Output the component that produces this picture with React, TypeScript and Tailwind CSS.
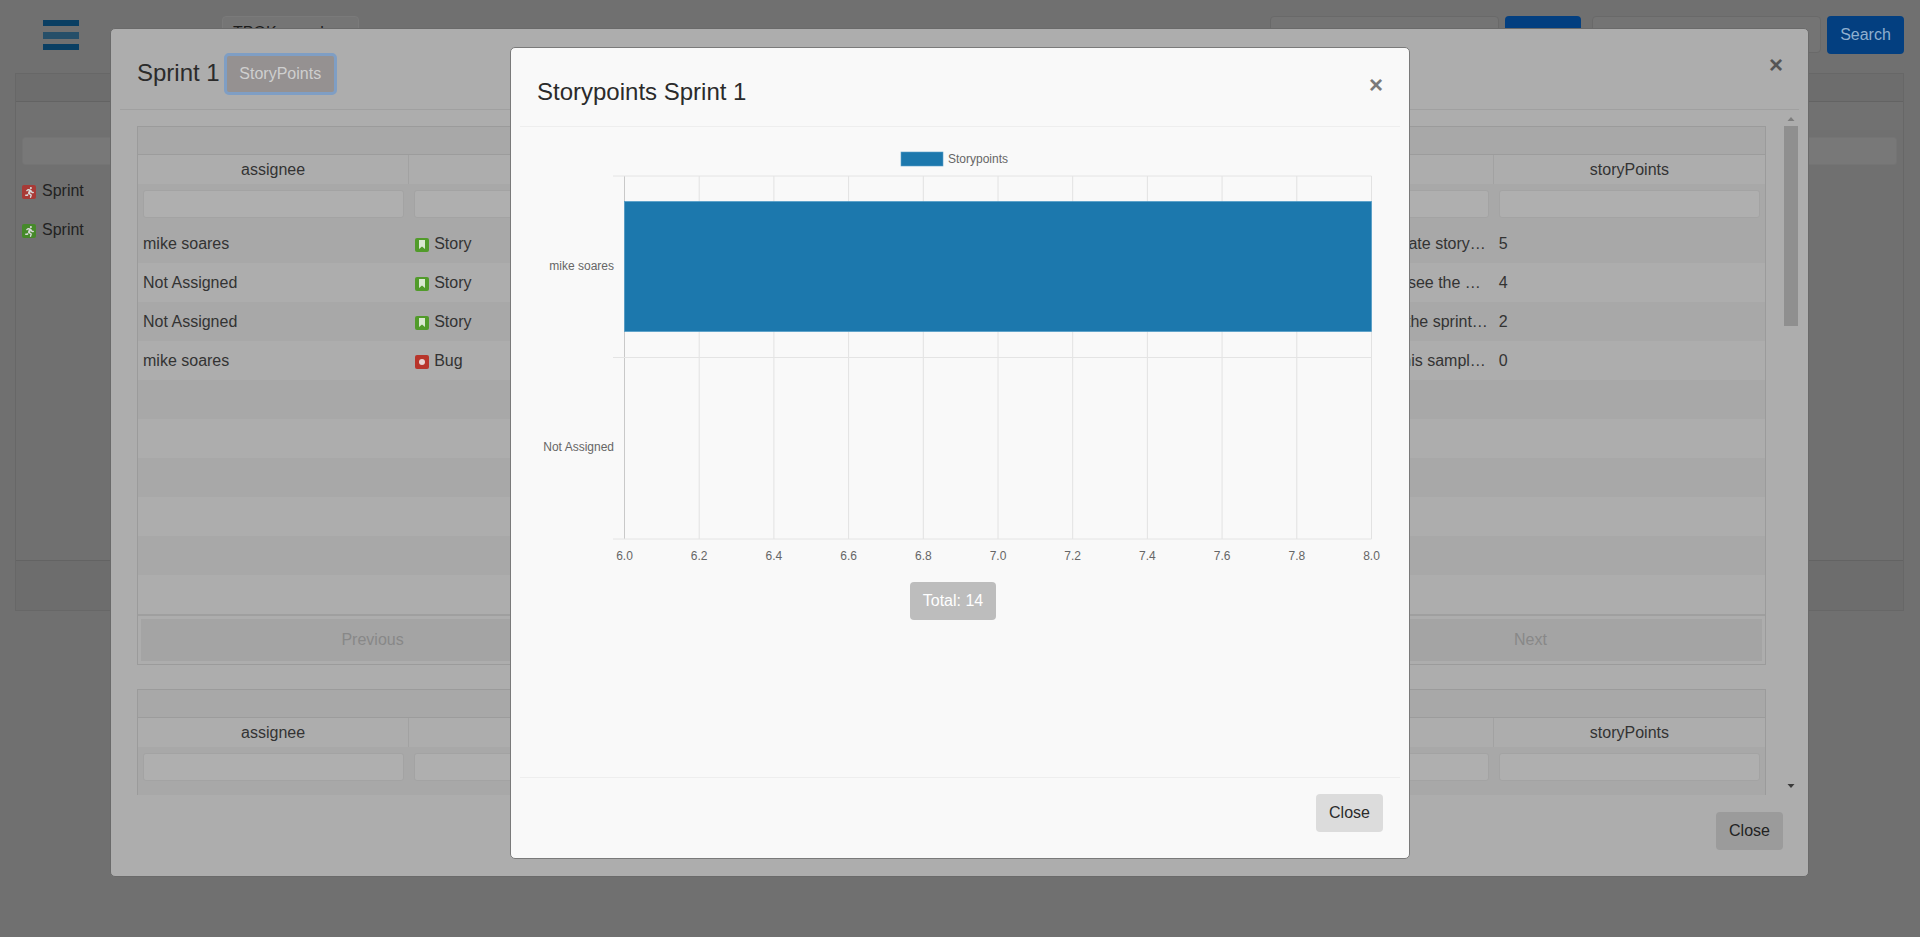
import React from "react";
import { FaRunning } from "react-icons/fa";

const font = "font-['Liberation_Sans',Arial,sans-serif]";

function SprintIcon({ color }: { color: string }) {
  return (
    <span className={`mt-[2px] flex h-[14px] w-[14px] items-center justify-center rounded-[2px] ${color}`}>
      <FaRunning className="h-[11px] w-[11px] text-[#d8d8d8]" />
    </span>
  );
}

function StoryIcon() {
  return (
    <span className="mt-[2px] flex h-[14px] w-[14px] items-center justify-center rounded-[2px] bg-[#519b2a]">
      <svg width="8" height="9" viewBox="0 0 8 9">
        <path d="M1 0h6v9L4 6.6 1 9z" fill="#d9e8d0" />
      </svg>
    </span>
  );
}

function BugIcon() {
  return (
    <span className="mt-[2px] flex h-[14px] w-[14px] items-center justify-center rounded-[2px] bg-[#b8352b]">
      <span className="h-[6px] w-[6px] rounded-full bg-[#e6d5d3]" />
    </span>
  );
}

function BackgroundPage() {
  return (
    <div className="flex h-full flex-col">
      <div className="flex h-[73px] items-start pt-[16px]">
        <div className="ml-[43px] mt-[4px] flex h-[30px] w-[36px] flex-col justify-between">
          <span className="h-[6px] bg-[#0a3f63]" />
          <span className="h-[7px] bg-[#264f69]" />
          <span className="h-[6px] bg-[#0a3f63]" />
        </div>
        <div className="ml-[143px] h-[37px] w-[137px] rounded-[4px] border border-[#7a7a7a] bg-[#757575] px-[10px] pt-[4px] text-[16px] text-[#1c1c1c]">
          TPOK sample
        </div>
        <div className="ml-[911px] h-[37px] w-[229px] rounded-[4px] border border-[#696969] bg-[#747474]" />
        <div className="ml-[6px] h-[37px] w-[76px] rounded-[4px] bg-[#033f80]" />
        <div className="ml-[11px] h-[37px] w-[229px] rounded-[4px] border border-[#696969] bg-[#747474]" />
        <div className="ml-[6px] flex h-[38px] w-[77px] items-center justify-center rounded-[4px] bg-[#033f80] text-[16px] text-[#8fb0d0]">
          Search
        </div>
      </div>
      <div className="ml-[15px] flex h-[538px] w-[1889px] flex-col border border-[#676767] bg-[#707070]">
        <div className="h-[28px] shrink-0 border-b border-[#636363] bg-[#6d6d6d]" />
        <div className="h-[28px] shrink-0 bg-[#717171]" />
        <div className="mx-[6px] mt-[7px] h-[28px] shrink-0 rounded-[3px] border border-[#747474] bg-[#787878]" />
        <div className="ml-[6px] mt-[16px] flex h-[20px] items-center gap-[6px] text-[16px] text-[#222222]">
          <SprintIcon color="bg-[#a83a36]" />
          Sprint
        </div>
        <div className="ml-[6px] mt-[19px] flex h-[20px] items-center gap-[6px] text-[16px] text-[#222222]">
          <SprintIcon color="bg-[#46892a]" />
          Sprint
        </div>
        <div className="mt-auto h-[50px] shrink-0 border-t border-[#636363] bg-[#6d6d6d]" />
      </div>
    </div>
  );
}

const rows: [string, "Story" | "Bug", string, string, string][] = [
  ["mike soares", "Story", "As a user, I can estimate story…", "5", "pr-[8px]"],
  ["Not Assigned", "Story", "As a user, I can see the …", "4", "pr-[13px]"],
  ["Not Assigned", "Story", "As a team, I can finish the sprint…", "2", "pr-[6px]"],
  ["mike soares", "Bug", "As a developer, this sampl…", "0", "pr-[8px]"],
];

function DataTable() {
  const heads = ["assignee", "issuetype", "key", "status", "summary", "storyPoints"];
  const empties = Array.from({ length: 6 });
  return (
    <div className="w-[1629px] border border-[#9b9b9b] text-[16px] text-[#333333]">
      <div className="h-[28px] border-b border-[#9c9c9c] bg-[#a8a8a8]" />
      <div className="grid h-[29px] grid-cols-6 bg-[#adadad]">
        {heads.map((h) => (
          <div key={h} className="flex items-center justify-center border-r border-[#a2a2a2] last:border-r-0">
            {h}
          </div>
        ))}
      </div>
      <div className="grid h-[40px] grid-cols-6 bg-[#a8a8a8]">
        {heads.map((h) => (
          <div key={h} className="px-[5px] pt-[6px]">
            <div className="h-[28px] rounded-[3px] border border-[#a3a3a3] bg-[#afafaf]" />
          </div>
        ))}
      </div>
      {rows.map((r, i) => (
        <div key={i} className={`grid h-[39px] grid-cols-6 items-center ${i % 2 === 0 ? "bg-[#a8a8a8]" : "bg-[#adadad]"}`}>
          <div className="pl-[5px]">{r[0]}</div>
          <div className="flex items-center gap-[5px] pl-[6px]">
            {r[1] === "Bug" ? <BugIcon /> : <StoryIcon />}
            {r[1]}
          </div>
          <div />
          <div />
          <div className={`overflow-hidden whitespace-nowrap text-right ${r[4]}`}>{r[2]}</div>
          <div className="pl-[5px]">{r[3]}</div>
        </div>
      ))}
      {empties.map((_, i) => (
        <div key={i} className={`h-[39px] ${i % 2 === 0 ? "bg-[#a8a8a8]" : "bg-[#adadad]"}`} />
      ))}
      <div className="flex h-[50px] border-t-[2px] border-[#9f9f9f] bg-[#adadad] p-[3px]">
        <div className="flex flex-1 items-center justify-center bg-[#a4a4a4] text-[#888888]">Previous</div>
        <div className="flex-[1.5]" />
        <div className="flex flex-1 items-center justify-center bg-[#a4a4a4] text-[#888888]">Next</div>
      </div>
    </div>
  );
}

function SprintModal() {
  return (
    <div className="absolute left-[110px] top-[28px] flex h-[849px] w-[1699px] flex-col rounded-[5px] border border-[#6a6a6a] bg-[#adadad] text-[#2b2b2b]">
      <div className="mx-[9px] flex h-[81px] shrink-0 items-start border-b border-[#a0a0a0] pl-[17px] pt-[25px]">
        <span className="mt-[2px] text-[24px] leading-[34px]">Sprint 1</span>
        <span className="-mt-[1px] ml-[4px] flex h-[42px] w-[113px] items-center justify-center rounded-[5px] border-[3px] border-[#7f9ec4] bg-[#959191] text-[16px] text-[#cfcfcf]">
          StoryPoints
        </span>
        <span className="ml-auto mr-[16px] -mt-[1px] text-[24px] font-bold leading-[24px] text-[#555555]">×</span>
      </div>
      <div className="flex h-[685px] shrink-0 overflow-hidden">
        <div className="flex flex-col gap-[24px] pl-[26px] pt-[16px]">
          <DataTable />
          <DataTable />
        </div>
        <div className="ml-[18px] flex w-[14px] flex-col items-center">
          <svg width="10" height="16" viewBox="0 0 10 16" className="shrink-0">
            <path d="M1.5 11 5 7l3.5 4z" fill="#7d7d7d" />
          </svg>
          <div className="h-[200px] w-[14px] bg-[#8f8f8f]" />
          <div className="flex-1" />
          <svg width="10" height="16" viewBox="0 0 10 16" className="shrink-0">
            <path d="M1.5 5 5 9l3.5-4z" fill="#3a3a3a" />
          </svg>
        </div>
      </div>
      <div className="flex flex-1 justify-end pr-[25px] pt-[17px]">
        <span className="flex h-[38px] w-[67px] items-center justify-center rounded-[4px] bg-[#9b9b9b] text-[16px] text-[#222222]">
          Close
        </span>
      </div>
    </div>
  );
}

function Chart() {
  const xs = Array.from({ length: 11 }, (_, i) => 624.5 + i * 74.7);
  const labels = ["6.0", "6.2", "6.4", "6.6", "6.8", "7.0", "7.2", "7.4", "7.6", "7.8", "8.0"];
  const f = { fontFamily: "'Liberation Sans', Arial, sans-serif", fontSize: 12, fill: "#666666" };
  return (
    <svg width="860" height="430" viewBox="530 140 860 430" className="block shrink-0">
      <rect x="901" y="151" width="42" height="14" fill="#1c78ad" stroke="#5a9fc8" strokeWidth="0.6" />
      <text x="948" y="162" {...f}>Storypoints</text>
      {xs.map((x, i) => (
        <line key={i} x1={x} x2={x} y1="175" y2="538" stroke={i === 0 ? "#c9c9c9" : "#e2e2e2"} strokeWidth="1" />
      ))}
      {[175, 356.5, 538].map((y) => (
        <line key={y} x1="613" x2="1371.5" y1={y} y2={y} stroke="#e4e4e4" strokeWidth="1" />
      ))}
      <rect x="624.5" y="200.5" width="747" height="130" fill="#1c78ad" stroke="#4d9ac6" strokeWidth="0.7" />
      <text x="614" y="269" textAnchor="end" {...f}>mike soares</text>
      <text x="614" y="450" textAnchor="end" {...f}>Not Assigned</text>
      {xs.map((x, i) => (
        <text key={i} x={x} y="558.5" textAnchor="middle" {...f}>{labels[i]}</text>
      ))}
    </svg>
  );
}

function StoryPointsModal() {
  return (
    <div className="absolute left-[510px] top-[47px] flex h-[812px] w-[900px] flex-col rounded-[5px] border border-[#7a7a7a] bg-[#f9f9f9] text-[#2b2b2b]">
      <div className="mx-[9px] flex h-[79px] shrink-0 items-start border-b border-[#eeeeee] pl-[17px] pt-[27px]">
        <span className="text-[24px] leading-[34px]">Storypoints Sprint 1</span>
        <span className="ml-auto mr-[17px] -mt-[5px] pt-[3px] text-[24px] font-bold leading-[24px] text-[#7a7a7a]">×</span>
      </div>
      <div className="flex flex-1 flex-col pl-[19px] pt-[14px]">
        <Chart />
        <div className="ml-[380px] mt-[11px] flex h-[38px] w-[86px] items-center justify-center rounded-[4px] bg-[#bdbdbd] text-[16px] text-white">
          Total: 14
        </div>
      </div>
      <div className="mx-[9px] flex h-[81px] shrink-0 justify-end border-t border-[#eeeeee] pr-[17px] pt-[16px]">
        <span className="flex h-[38px] w-[67px] items-center justify-center rounded-[4px] bg-[#dcdcdc] text-[16px] text-[#2b2b2b]">
          Close
        </span>
      </div>
    </div>
  );
}

export default function App() {
  return (
    <div className={`relative h-[937px] w-[1920px] overflow-hidden bg-[#707070] ${font}`}>
      <BackgroundPage />
      <SprintModal />
      <StoryPointsModal />
    </div>
  );
}
